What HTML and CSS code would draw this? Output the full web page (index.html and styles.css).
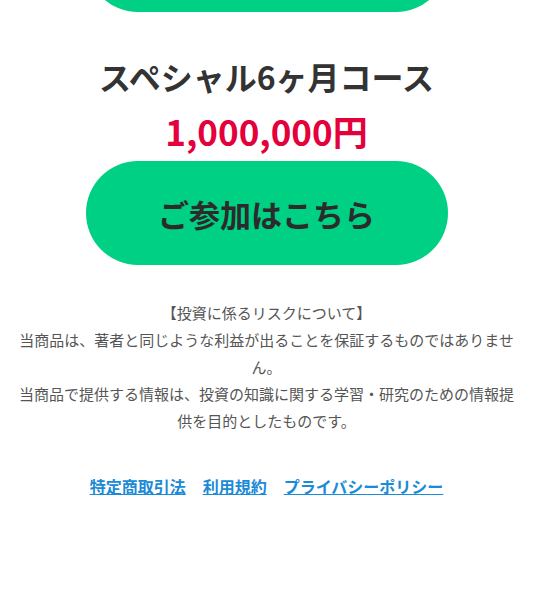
FILE: index.html
```html
<!DOCTYPE html>
<html lang="ja">
<head>
  <meta charset="UTF-8"/>
  <meta name="viewport" content="width=device-width,initial-scale=1"/>
  <title>スペシャル6ヶ月コース</title>
  <link rel="stylesheet" href="styles.css">
</head>
<body>

  <div class="page">
    <!-- previous course, only its button's lower edge is in view -->
    <div class="course course-prev">
      <a class="join-btn" href="#" aria-label="ご参加はこちら"></a>
    </div>

    <div class="course">
      <h2 class="course-title">スペシャル6ヶ月コース</h2>
      <p class="course-price">1,000,000円</p>
      <a class="join-btn" href="#">ご参加はこちら</a>
    </div>

    <div class="risk">
      <p>【投資に係るリスクについて】</p>
      <p>当商品は、著者と同じような利益が出ることを保証するものではありません。</p>
      <p>当商品で提供する情報は、投資の知識に関する学習・研究のための情報提供を目的としたものです。</p>
    </div>

    <nav class="footer-links">
      <a href="#">特定商取引法</a>
      <a href="#">利用規約</a>
      <a href="#">プライバシーポリシー</a>
    </nav>
  </div>

</body>
</html>
```

FILE: styles.css
```css
body {
  margin: 0; background: #fff; color: #333;
  font-family: "Noto Sans CJK JP", "Noto Sans", sans-serif;
}
.page { margin-top: -92px; padding: 0 18px 80px; }
.course { display: flex; flex-direction: column; align-items: center; }
.course-title {
  margin: 44px 0 0; font-size: 32px; line-height: 40px; font-weight: 700; color: #333;
}
.course-price {
  margin: 17px 0 0; font-size: 35px; line-height: 36px; font-weight: 700; color: #e4003a;
}
.join-btn {
  display: flex; align-items: center; justify-content: center;
  width: 362px; height: 104px; margin-top: 12px;
  background: #00d084; border-radius: 52px;
  color: #2b2b2b; font-size: 31px; font-weight: 700; text-decoration: none;
}
.course-prev .join-btn { margin-top: 0; }
.risk {
  margin-top: 34px; text-align: center; color: #555;
  font-size: 15px; line-height: 27px;
}
.risk p { margin: 0; }
.footer-links {
  display: flex; justify-content: center; gap: 17px; margin-top: 40px;
}
.footer-links a {
  color: #1b8bd6; font-size: 16px; line-height: 24px; font-weight: 700;
}
```
